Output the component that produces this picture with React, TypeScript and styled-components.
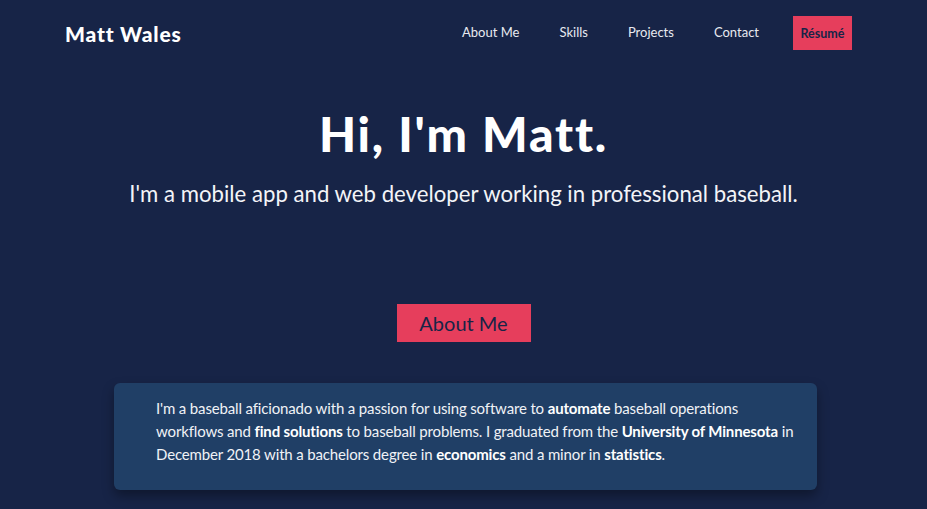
import React from "react";
import styled, { createGlobalStyle } from "styled-components";

const Global = createGlobalStyle`
  html, body { margin: 0; padding: 0; background: #172447; }
  body { font-family: "Lato", "Noto Sans", sans-serif; color: #f3f4f8; }
  * { box-sizing: border-box; }
`;

const Page = styled.div`
  width: 927px;
  min-height: 509px;
  background: #172447;
  display: flex;
  flex-direction: column;
  align-items: center;
  overflow: hidden;
`;

const NavBar = styled.nav`
  width: 100%;
  height: 66px;
  display: flex;
  align-items: center;
  justify-content: space-between;
  padding: 0 75px 0 65px;
`;

const Logo = styled.div`
  font-family: "Lato", sans-serif;
  font-weight: 900;
  font-size: 21px;
  letter-spacing: 0.8px;
  color: #ffffff;
`;

const NavLinks = styled.div`
  display: flex;
  align-items: center;
`;

const NavLink = styled.a<{ $gap: number }>`
  font-size: 13px;
  color: #e8eaf0;
  margin-left: ${(p) => p.$gap}px;
  margin-top: -2px;
  text-decoration: none;
`;

const ResumeButton = styled.a`
  margin-left: 34px;
  background: #e63e5c;
  color: #172447;
  font-size: 12.5px;
  font-weight: 700;
  width: 59px;
  height: 34px;
  display: flex;
  align-items: center;
  justify-content: center;
  text-decoration: none;
`;

const Hero = styled.header`
  display: flex;
  flex-direction: column;
  align-items: center;
  padding-top: 39px;
`;

const Title = styled.h1`
  margin: 0;
  font-family: "Lato", sans-serif;
  font-weight: 900;
  font-size: 48px;
  letter-spacing: 1.8px;
  line-height: 58px;
  color: #ffffff;
`;

const Subtitle = styled.p`
  margin: 15px 0 0;
  font-size: 22.2px;
  line-height: 32px;
  color: #f3f4f8;
`;

const CTA = styled.a`
  margin-top: 94px;
  width: 134px;
  height: 38px;
  background: #e63e5c;
  color: #172447;
  font-size: 20px;
  display: flex;
  align-items: center;
  justify-content: center;
  text-decoration: none;
`;

const Card = styled.section`
  margin: 41px 0 0 4px;
  width: 703px;
  background: #203f66;
  border-radius: 6px;
  box-shadow: 0 6px 12px rgba(0, 0, 0, 0.35);
  padding: 14px 16px 24px 42px;
`;

const CardText = styled.p`
  margin: 0;
  font-size: 15px;
  letter-spacing: -0.15px;
  line-height: 23px;
  color: #f0f2f6;
  b { font-weight: 700; color: #ffffff; }
`;

export default function App() {
  return (
    <Page>
      <Global />
      <NavBar>
        <Logo>Matt Wales</Logo>
        <NavLinks>
          <NavLink $gap={0}>About Me</NavLink>
          <NavLink $gap={40}>Skills</NavLink>
          <NavLink $gap={40}>Projects</NavLink>
          <NavLink $gap={40}>Contact</NavLink>
          <ResumeButton>Résumé</ResumeButton>
        </NavLinks>
      </NavBar>
      <Hero>
        <Title>Hi, I'm Matt.</Title>
        <Subtitle>I'm a mobile app and web developer working in professional baseball.</Subtitle>
        <CTA>About Me</CTA>
      </Hero>
      <Card>
        <CardText>
          I'm a baseball aficionado with a passion for using software to <b>automate</b> baseball operations
          workflows and <b>find solutions</b> to baseball problems. I graduated from the <b>University of Minnesota</b> in
          December 2018 with a bachelors degree in <b>economics</b> and a minor in <b>statistics</b>.
        </CardText>
      </Card>
    </Page>
  );
}
